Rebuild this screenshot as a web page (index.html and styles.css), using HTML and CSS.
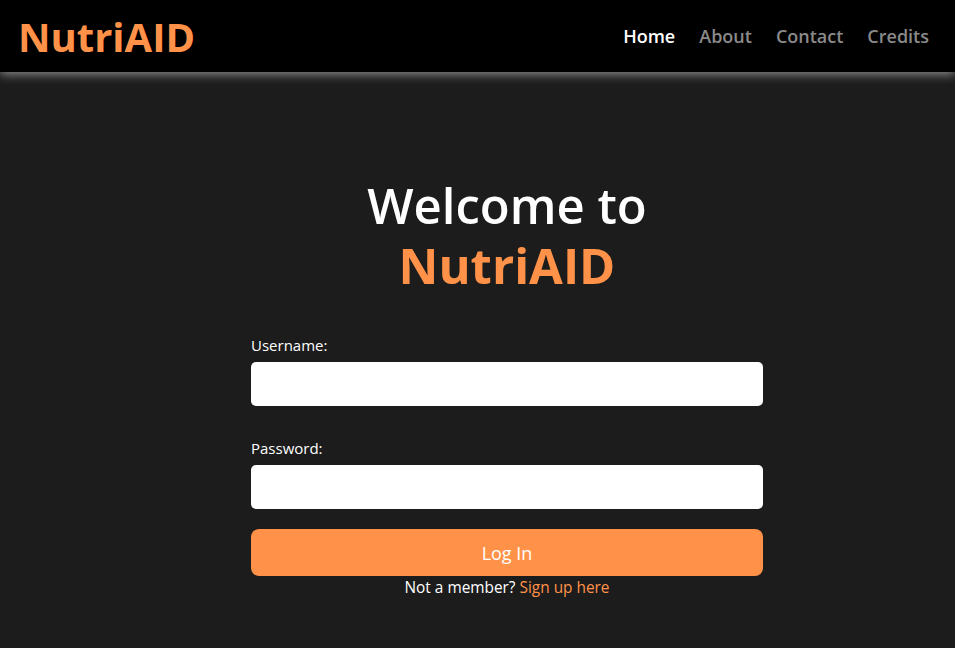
FILE: index.html
```html
<!DOCTYPE html>
<html lang="en">
<head>
<meta charset="utf-8">
<title>NutriAID - Login</title>
<link rel="stylesheet" href="styles.css">
</head>
<body>
<header class="topbar">
  <a class="logo" href="#">NutriAID</a>
  <nav class="nav">
    <a class="nav-link active" href="#">Home</a>
    <a class="nav-link" href="#">About</a>
    <a class="nav-link" href="#">Contact</a>
    <a class="nav-link" href="#">Credits</a>
  </nav>
</header>
<main class="main">
  <h1 class="title">Welcome to<br><span class="brand">NutriAID</span></h1>
  <form class="form">
    <label class="label" for="username">Username:</label>
    <input class="input" id="username" type="text">
    <label class="label label-gap" for="password">Password:</label>
    <input class="input" id="password" type="password">
    <button class="btn" type="button">Log In</button>
    <p class="signup">Not a member? <a class="signup-link" href="#">Sign up here</a></p>
  </form>
</main>
</body>
</html>
```
FILE: styles.css
```css
* { box-sizing: border-box; }
html, body { margin: 0; padding: 0; }
body {
  background: #1c1c1c;
  font-family: "Open Sans", "Noto Sans", sans-serif;
  color: #fff;
  height: 648px;
  overflow: hidden;
}
.topbar {
  height: 72px;
  background: #000;
  display: flex;
  align-items: center;
  justify-content: space-between;
  padding: 0 26px 0 18px;
  box-shadow: 0 2px 10px rgba(200, 200, 200, 0.7);
  position: relative;
}
.logo {
  color: #ff9248;
  font-weight: 700;
  font-size: 40px;
  text-decoration: none;
  letter-spacing: 0;
}
.nav { display: flex; gap: 24px; }
.nav-link {
  color: #8a8a8a;
  text-decoration: none;
  font-size: 18px;
  font-weight: 600;
}
.nav-link.active { color: #fff; }
.main {
  display: flex;
  flex-direction: column;
  align-items: center;
  padding-top: 103px;
  padding-left: 59px;
}
.title {
  margin: 0;
  text-align: center;
  font-size: 49px;
  font-weight: 600;
  line-height: 60px;
}
.brand { color: #ff9248; font-weight: 700; }
.form {
  width: 512px;
  display: flex;
  flex-direction: column;
  margin-top: 40px;
}
.label { font-size: 15px; line-height: 20px; margin-bottom: 7px; }
.label-gap { margin-top: 32px; }
.input {
  height: 44px;
  border: none;
  border-radius: 5px;
  background: #fff;
  font-size: 16px;
  padding: 0 10px;
}
.btn {
  margin-top: 20px;
  height: 47px;
  border: none;
  border-radius: 8px;
  background: #ff9248;
  color: #fff;
  font-family: inherit;
  font-size: 18px;
}
.signup {
  margin: 2px 0 0;
  text-align: center;
  font-size: 15.4px;
  line-height: 20px;
}
.signup-link { color: #ff9248; text-decoration: none; }
```
